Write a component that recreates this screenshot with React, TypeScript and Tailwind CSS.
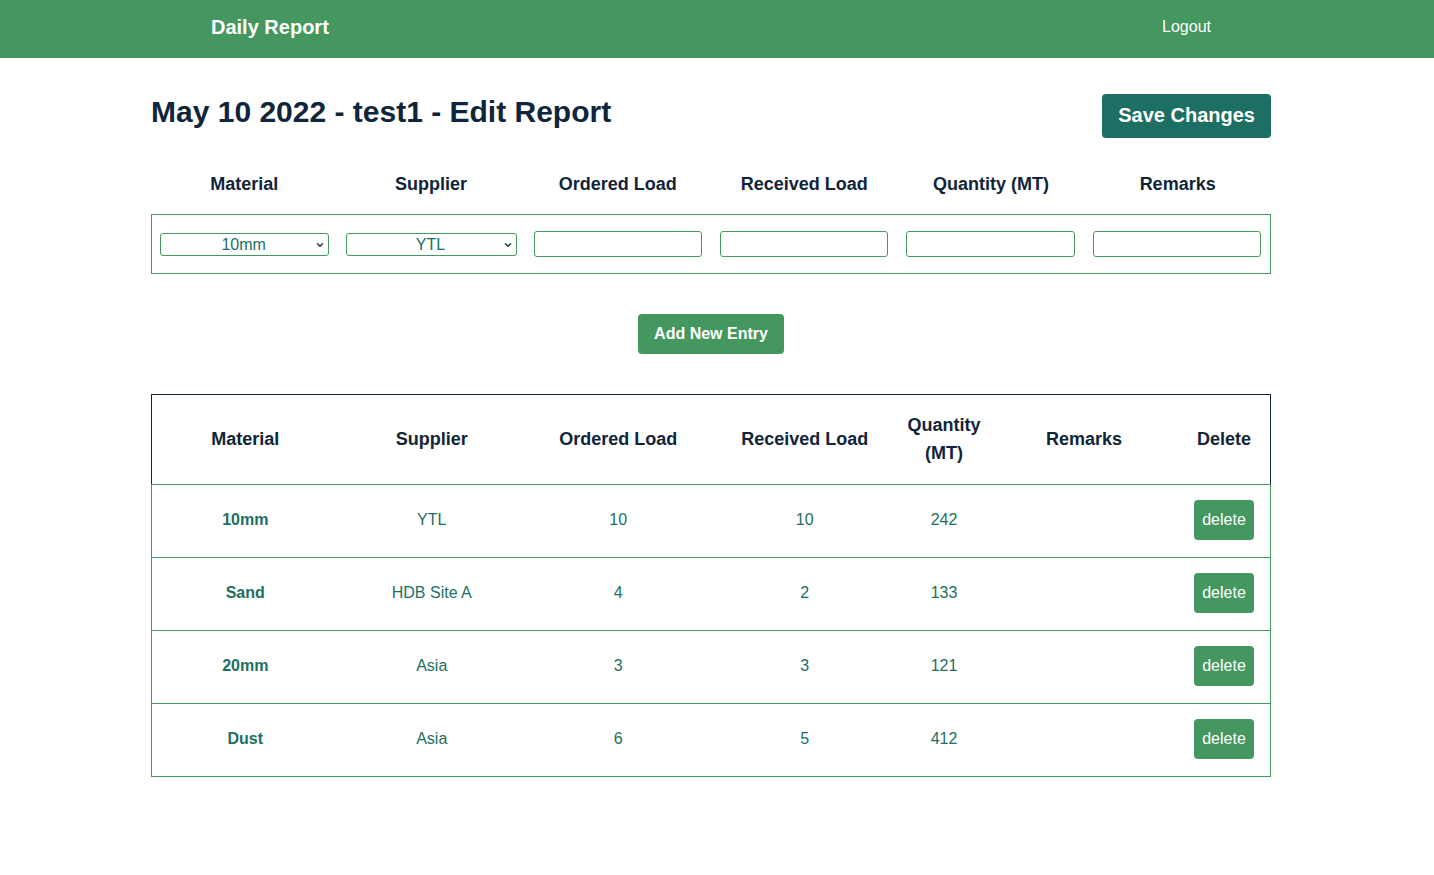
import { ChevronDown } from "lucide-react";

const entries = [
  { material: "10mm", supplier: "YTL", ordered: 10, received: 10, qty: 242, remarks: "" },
  { material: "Sand", supplier: "HDB Site A", ordered: 4, received: 2, qty: 133, remarks: "" },
  { material: "20mm", supplier: "Asia", ordered: 3, received: 3, qty: 121, remarks: "" },
  { material: "Dust", supplier: "Asia", ordered: 6, received: 5, qty: 412, remarks: "" },
];

const formHeaders = ["Material", "Supplier", "Ordered Load", "Received Load", "Quantity (MT)", "Remarks"];

const cols = "grid grid-cols-[186.5px_186.5px_186.5px_186.5px_92px_188px_1fr]";

function FakeSelect({ value, options }: { value: string; options: string[] }) {
  return (
    <div className="relative h-[23px] w-full">
      <select
        defaultValue={value}
        className="h-[23px] w-full appearance-none rounded-[3px] border border-[#43975f] bg-white pl-[8px] pr-[10px] text-center text-[16px] leading-[21px] text-[#1c6f62] [text-align-last:center]"
      >
        {options.map((o) => (
          <option key={o}>{o}</option>
        ))}
      </select>
      <ChevronDown
        className="pointer-events-none absolute right-[4px] top-[7px] h-[10px] w-[10px] text-[#1f3b35]"
        strokeWidth={3.5}
      />
    </div>
  );
}

export default function App() {
  return (
    <div className="min-h-screen bg-white font-['Liberation_Sans',Arial,sans-serif]">
      <nav className="h-[58px] bg-[#43975f] pr-[12px]">
        <div className="mx-auto flex h-full w-[1000px] items-center justify-between pb-[4px]">
          <span className="text-[20px] font-bold text-white">Daily Report</span>
          <span className="text-[16px] text-white">Logout</span>
        </div>
      </nav>

      <main className="pr-[12px]">
        <div className="mx-auto w-[1120px]">
          <div className="mt-[36px] flex h-[44px] items-start justify-between">
            <h1 className="text-[30px] font-bold leading-[36px] text-[#10253a]">
              May 10 2022 - test1 - Edit Report
            </h1>
            <button className="h-[44px] rounded-[4px] bg-[#1c6f62] px-[16px] pb-[2px] text-[20px] font-bold text-white">
              Save Changes
            </button>
          </div>

          <div className="mt-[24px] grid h-[44px] grid-cols-6 items-center">
            {formHeaders.map((h) => (
              <div key={h} className="text-center text-[18px] font-bold text-[#10253a]">
                {h}
              </div>
            ))}
          </div>

          <div className="mt-[8px] grid h-[60px] grid-cols-6 items-center border border-[#43975f]">
            <div className="pl-[8px] pr-[9px]">
              <FakeSelect value="10mm" options={["10mm", "20mm", "Sand", "Dust"]} />
            </div>
            <div className="pl-[8px] pr-[8px]">
              <FakeSelect value="YTL" options={["YTL", "HDB Site A", "Asia"]} />
            </div>
            {[0, 1, 2, 3].map((i) => (
              <div key={i} className="pl-[9px] pr-[9px]">
                <input className="h-[26px] w-full rounded-[3px] border border-[#43975f] bg-white px-1 text-[16px] text-[#1c6f62]" />
              </div>
            ))}
          </div>

          <div className="mt-[40px] flex justify-center">
            <button className="h-[40px] rounded-[4px] bg-[#43975f] px-[16px] text-[16px] font-bold text-white">
              Add New Entry
            </button>
          </div>

          <div className="mt-[40px]">
            <div className={`${cols} h-[90px] items-center border-x border-t border-[#10253a] pb-[2px] text-center text-[18px] font-bold leading-[28px] text-[#10253a]`}>
              <div>Material</div>
              <div>Supplier</div>
              <div>Ordered Load</div>
              <div>Received Load</div>
              <div>Quantity (MT)</div>
              <div>Remarks</div>
              <div>Delete</div>
            </div>
            <div className="border-x border-b border-[#43975f]">
              {entries.map((e) => (
                <div
                  key={e.material}
                  className={`${cols} h-[73px] items-center border-t border-[#43975f] pb-[2px] text-center text-[16px] text-[#1c6f62]`}
                >
                  <div className="font-bold">{e.material}</div>
                  <div>{e.supplier}</div>
                  <div>{e.ordered}</div>
                  <div>{e.received}</div>
                  <div>{e.qty}</div>
                  <div>{e.remarks}</div>
                  <div className="flex justify-center">
                    <button className="h-[40px] rounded-[4px] bg-[#43975f] px-[8px] text-[16px] text-white">
                      delete
                    </button>
                  </div>
                </div>
              ))}
            </div>
          </div>
        </div>
      </main>
    </div>
  );
}
